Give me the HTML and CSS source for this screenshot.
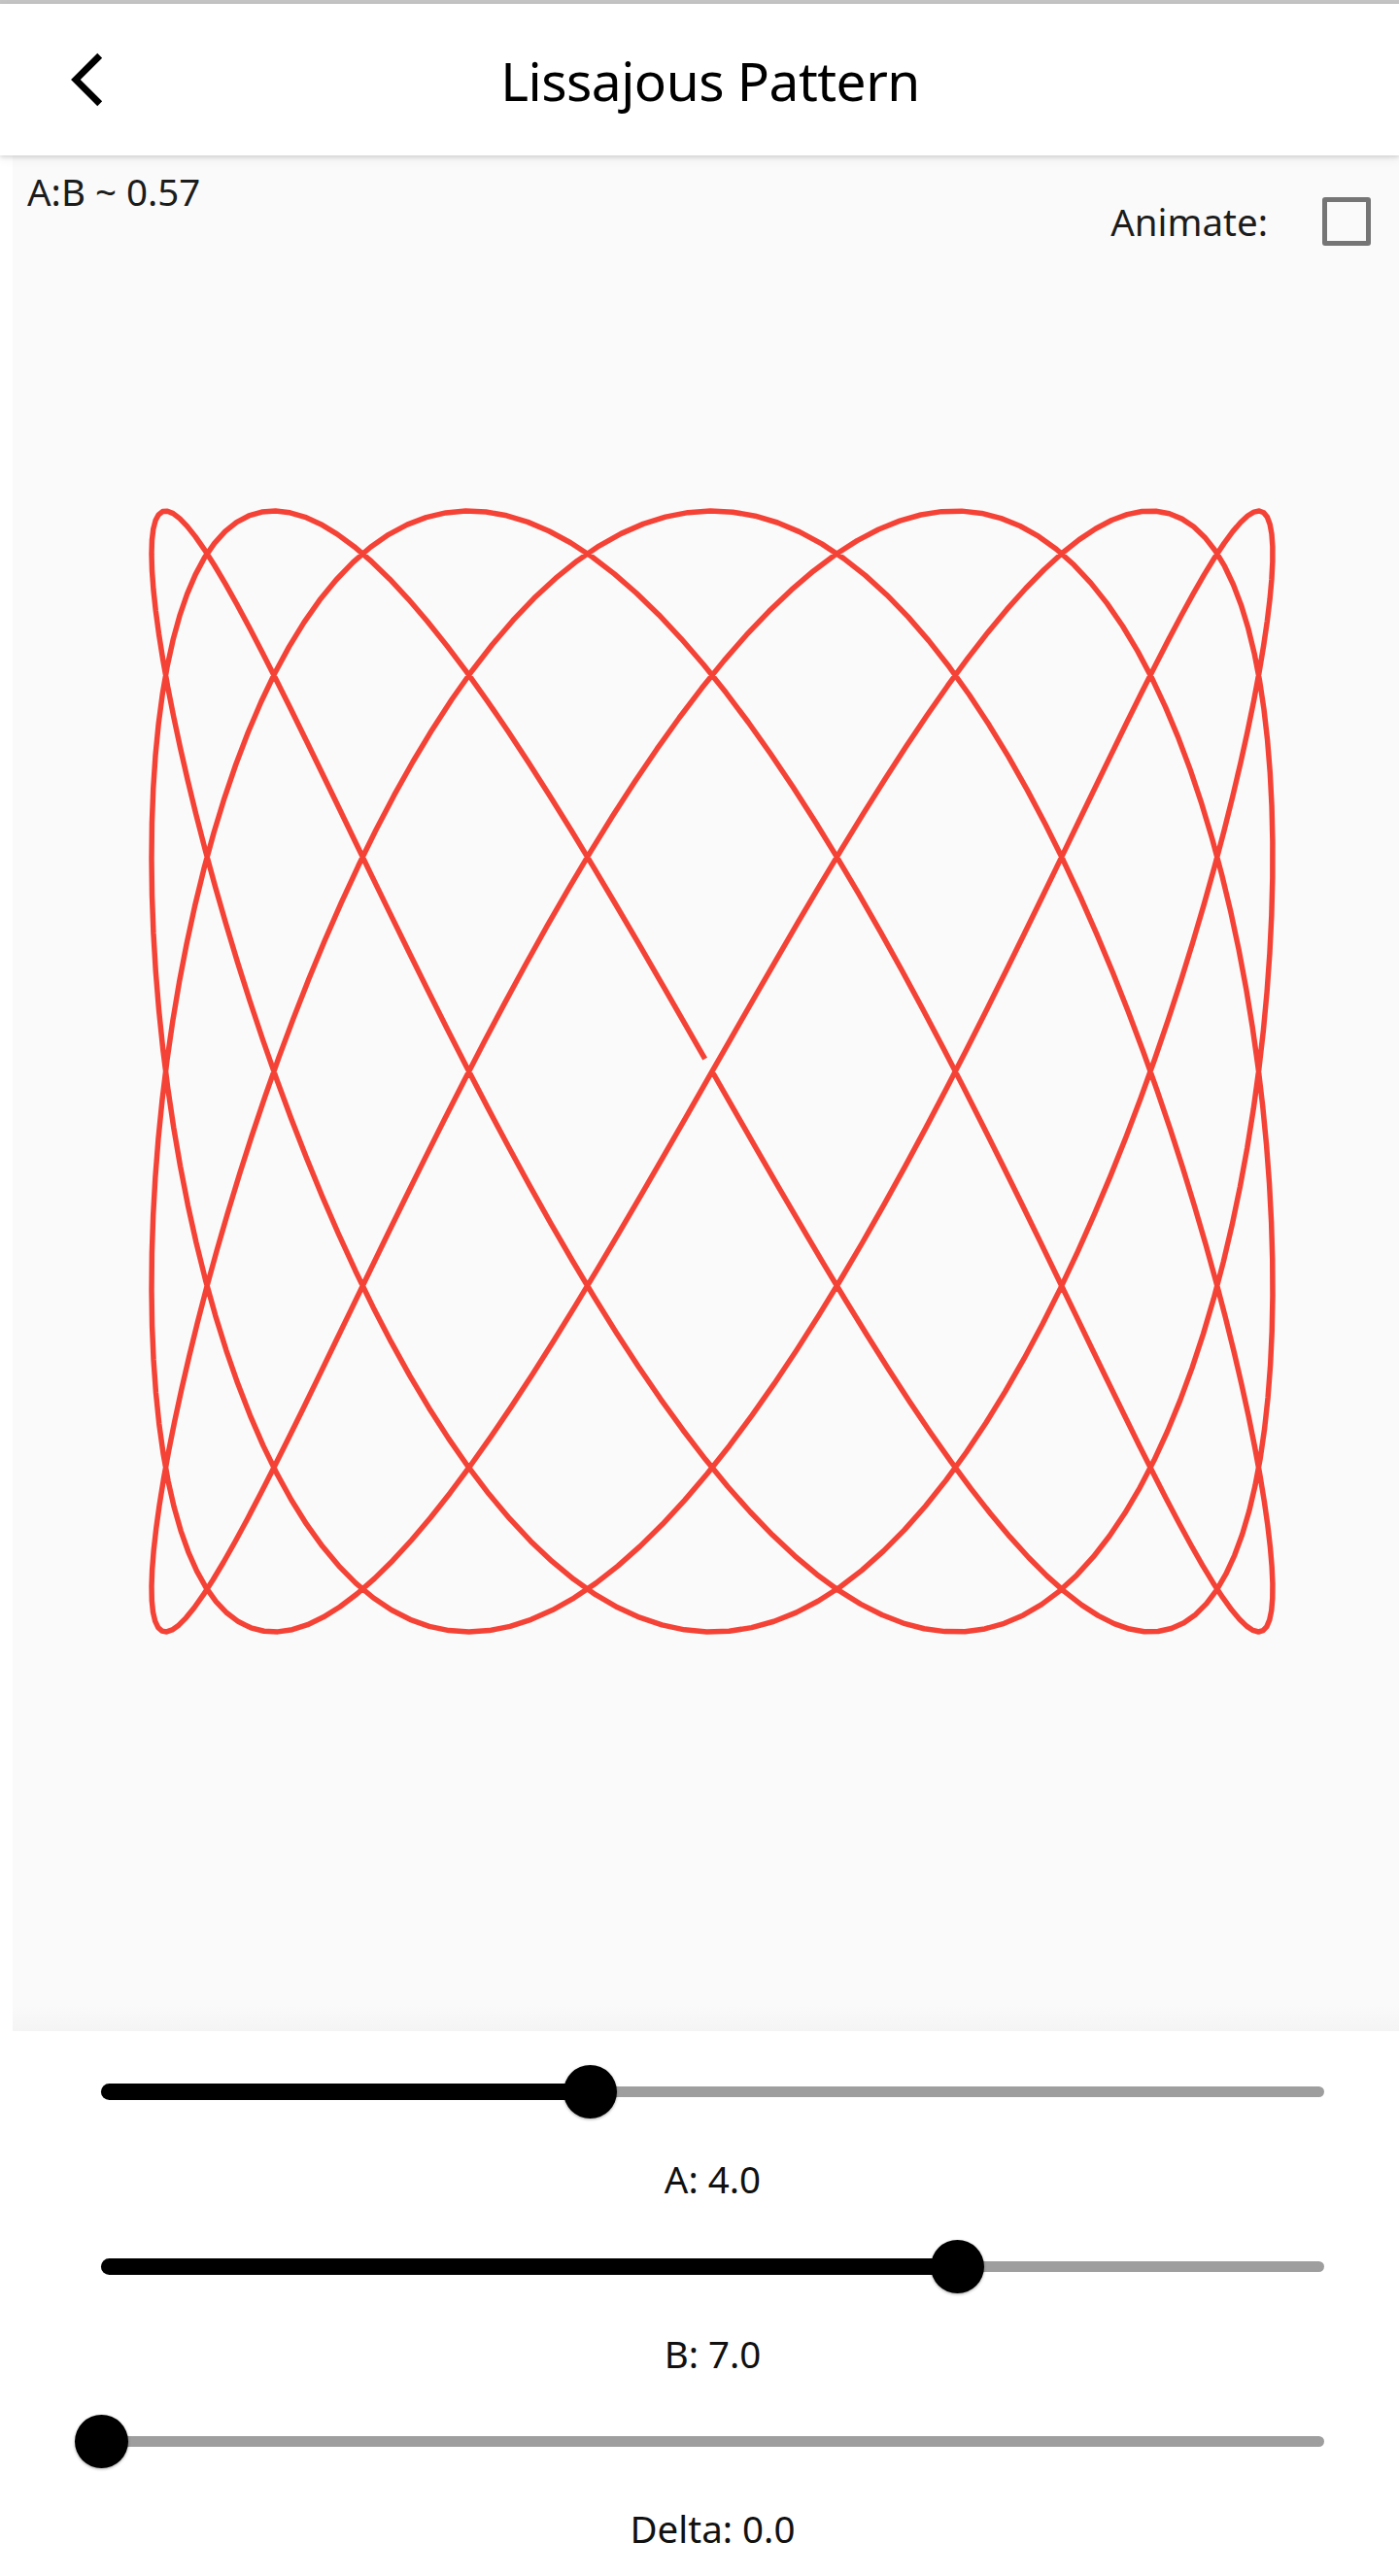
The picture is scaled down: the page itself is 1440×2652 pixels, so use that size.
FILE: index.html
```html
<!DOCTYPE html>
<html lang="en">
<head>
<meta charset="utf-8">
<title>Lissajous Pattern</title>
<link rel="stylesheet" href="styles.css">
</head>
<body>
<div class="statusline"></div>
<header class="appbar">
  <button class="back" aria-label="Back">
    <svg viewBox="0 0 24 24" class="back-icon"><path d="M17.51 3.87L15.73 2.1 5.84 12l9.9 9.9 1.77-1.77L9.38 12l8.13-8.13z"/></svg>
  </button>
  <h1 class="title">Lissajous Pattern</h1>
  <div class="spacer"></div>
</header>
<main class="canvas">
  <svg class="plot" viewBox="0 0 1427 1931" width="1427" height="1931">
    <path id="curve" class="curve" d=""/>
  </svg>
  <div class="canvas-head">
    <span class="ratio">A:B ~ 0.57</span>
    <div class="animate">
      <span class="animate-label">Animate:</span>
      <span class="checkbox"></span>
    </div>
  </div>
</main>
<section class="controls">
  <div class="slider" style="--v:40%">
    <div class="track"><div class="active"></div><div class="thumb"></div></div>
  </div>
  <p class="value">A: 4.0</p>
  <div class="slider" style="--v:70%">
    <div class="track"><div class="active"></div><div class="thumb"></div></div>
  </div>
  <p class="value">B: 7.0</p>
  <div class="slider" style="--v:0%">
    <div class="track"><div class="active"></div><div class="thumb"></div></div>
  </div>
  <p class="value">Delta: 0.0</p>
</section>
<script src="script.js"></script>
</body>
</html>
```
FILE: styles.css
```css
* { box-sizing: border-box; }
html, body { margin: 0; padding: 0; }
body {
  width: 1440px;
  background: #ffffff;
  font-family: "Noto Sans", "Open Sans", sans-serif;
  color: #1c1c1c;
  overflow: hidden;
}
.statusline {
  height: 4px;
  background: #c4c4c4;
}
.appbar {
  position: relative;
  z-index: 2;
  height: 156px;
  padding-left: 13px;
  display: grid;
  grid-template-columns: 154px 1fr 145px;
  align-items: center;
  background: #ffffff;
  box-shadow: 0 2px 4px rgba(0,0,0,0.12), 0 4px 10px rgba(0,0,0,0.06);
}
.back {
  width: 154px;
  height: 156px;
  border: 0;
  padding: 0;
  background: transparent;
  display: flex;
  align-items: center;
  justify-content: center;
}
.back-icon {
  width: 66px;
  height: 66px;
  fill: #000;
}
.title {
  margin: 0;
  font-size: 55px;
  font-weight: 400;
  line-height: 75px;
  letter-spacing: -0.5px;
  text-align: center;
  color: #000;
}
.canvas {
  position: relative;
  margin-left: 13px;
  height: 1931px;
  background: linear-gradient(to bottom, #fafafa 0, #fafafa 1905px, #f4f4f4 1931px);
  padding: 11px 29px 0 15px;
}
.plot {
  position: absolute;
  left: 0;
  top: 0;
}
.curve {
  fill: none;
  stroke: #f44336;
  stroke-width: 5.5;
  stroke-linejoin: round;
}
.canvas-head {
  position: relative;
  display: flex;
  justify-content: space-between;
  align-items: flex-start;
}
.ratio, .animate-label {
  font-size: 38.5px;
  line-height: 52.4px;
  color: #1c1c1c;
}
.animate {
  margin-top: 31px;
  display: flex;
  align-items: flex-start;
  gap: 56px;
}
.checkbox {
  width: 50px;
  height: 50px;
  margin-top: 1px;
  border: 5.5px solid #757575;
  border-radius: 3px;
}
.controls {
  padding: 0 77px 0 104px;
}
.slider {
  height: 124px;
  display: flex;
  align-items: center;
}
.track {
  position: relative;
  width: 100%;
  height: 11px;
  background: #9e9e9e;
  border-radius: 6px;
}
.active {
  position: absolute;
  left: 0;
  top: 50%;
  width: var(--v);
  height: 17px;
  margin-top: -8.5px;
  background: #000;
  border-radius: 9px 0 0 9px;
}
.thumb {
  position: absolute;
  left: var(--v);
  top: 50%;
  width: 55px;
  height: 55px;
  margin: -27.5px 0 0 -27.5px;
  border-radius: 50%;
  background: #000;
  box-shadow: 0 1px 3px rgba(0,0,0,0.35);
}
.value {
  margin: 0;
  height: 56px;
  font-size: 38.5px;
  line-height: 56px;
  text-align: center;
  color: #111;
}
```
FILE: script.js
```js
(function () {
  var A = 4, B = 7, delta = 0;
  var cx = 720, cy = 943, r = 577;
  var parts = [];
  for (var t = 0; t <= 2 * Math.PI; t += 0.01) {
    var x = cx + r * Math.sin(A * t + delta);
    var y = cy + r * Math.sin(B * t);
    parts.push((parts.length ? 'L' : 'M') + x.toFixed(2) + ' ' + y.toFixed(2));
  }
  document.getElementById('curve').setAttribute('d', parts.join(' '));
})();
```
